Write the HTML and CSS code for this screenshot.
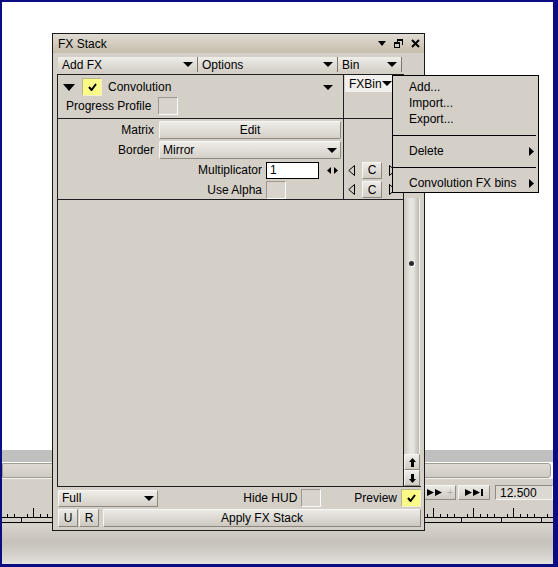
FILE: index.html
```html
<!DOCTYPE html>
<html>
<head>
<meta charset="utf-8">
<title>FX Stack</title>
<link rel="stylesheet" href="styles.css">
</head>
<body>
<div class="screen">
  <div class="desk"></div>
  <div class="band"></div>
  <div class="band-gap"></div>
  <div class="slider"></div>
  <div class="transport">
    <div class="tbtn tbtn-ff">
      <svg width="16" height="7" viewBox="0 0 16 7"><path d="M0 0l7 3.5L0 7zM8 0l7 3.5L8 7z" fill="#000"/></svg>
      <span class="plus">+</span>
    </div>
    <div class="tbtn tbtn-end">
      <svg width="19" height="7" viewBox="0 0 19 7"><path d="M0 0l7 3.5L0 7zM8 0l7 3.5L8 7z" fill="#000"/><rect x="16" y="0" width="2" height="7" fill="#000"/></svg>
    </div>
    <div class="tfield">12.500</div>
  </div>
  <div class="ruler">
    <svg width="551" height="19" viewBox="0 0 551 19">
      <defs>
        <pattern id="ticks" x="31" y="0" width="40" height="19" patternUnits="userSpaceOnUse">
          <path d="M0.5 3v9M7.5 9v3M14.5 9v3M21.5 9v3M28.5 12v5M34.5 9v3" stroke="#000" stroke-width="1"/>
        </pattern>
      </defs>
      <rect x="0" y="0" width="551" height="19" fill="url(#ticks)"/>
      <path d="M0 12.5H551M0 17.5H551" stroke="#000" stroke-width="1"/>
    </svg>
  </div>
  <div class="floor"></div>

  <div class="window">
    <div class="titlebar">
      <span class="title">FX Stack</span>
      <div class="tb-icons">
        <svg width="8" height="5" viewBox="0 0 8 5"><path d="M0 0h8L4 5z" fill="#000"/></svg>
        <svg width="9" height="9" viewBox="0 0 9 9"><rect x="3" y="0" width="6" height="2" fill="#000"/><path d="M8.5 2v4M3.5 2v1" stroke="#000"/><rect x="0" y="3" width="6" height="2" fill="#000"/><rect x="0.5" y="4.5" width="5" height="4" fill="none" stroke="#000"/></svg>
        <svg width="9" height="9" viewBox="0 0 9 9"><path d="M1 1L8 8M8 1L1 8" stroke="#000" stroke-width="2"/></svg>
      </div>
    </div>
    <div class="win-body">
      <div class="menubar">
        <div class="dd dd-add"><span>Add FX</span><svg width="10" height="5" viewBox="0 0 10 5"><path d="M0 0h10L5 5z" fill="#000"/></svg></div>
        <div class="dd dd-opt"><span>Options</span><svg width="10" height="5" viewBox="0 0 10 5"><path d="M0 0h10L5 5z" fill="#000"/></svg></div>
        <div class="dd dd-bin"><span>Bin</span><svg width="10" height="5" viewBox="0 0 10 5"><path d="M0 0h10L5 5z" fill="#000"/></svg></div>
      </div>
      <div class="stack">
        <div class="scroll-panel">
          <div class="fx-head">
            <div class="head-main">
              <div class="head-row">
                <svg class="collapse" width="12" height="7" viewBox="0 0 12 7"><path d="M0 0h12L6 7z" fill="#000"/></svg>
                <span class="ycheck"><svg width="9" height="8" viewBox="0 0 9 8"><path d="M1 4l2.5 3L8 1" fill="none" stroke="#000" stroke-width="2"/></svg></span>
                <span class="fx-name">Convolution</span>
                <svg class="head-arrow" width="10" height="5" viewBox="0 0 10 5"><path d="M0 0h10L5 5z" fill="#000"/></svg>
              </div>
              <div class="prog-row">
                <span>Progress Profile</span>
                <span class="cbox cbox-prog"></span>
              </div>
            </div>
            <div class="head-side">
              <div class="fxbin"><span>FXBin</span><svg width="10" height="5" viewBox="0 0 10 5"><path d="M0 0h10L5 5z" fill="#000"/></svg></div>
            </div>
          </div>
          <div class="fx-params">
            <div class="params-main">
              <div class="prow">
                <span class="plabel">Matrix</span>
                <div class="pbtn">Edit</div>
              </div>
              <div class="prow">
                <span class="plabel">Border</span>
                <div class="pdd"><span>Mirror</span><svg width="10" height="5" viewBox="0 0 10 5"><path d="M0 0h10L5 5z" fill="#000"/></svg></div>
              </div>
              <div class="prow">
                <span class="plabel plabel-wide">Multiplicator</span>
                <div class="pinput">1</div>
                <svg class="lr" width="11" height="7" viewBox="0 0 11 7"><path d="M0 3.5L4 0v7zM7 0l4 3.5L7 7z" fill="#000"/></svg>
              </div>
              <div class="prow">
                <span class="plabel plabel-wide">Use Alpha</span>
                <span class="cbox"></span>
              </div>
            </div>
            <div class="params-side">
              <div class="srow"></div>
              <div class="srow"></div>
              <div class="srow">
                <svg width="7" height="11" viewBox="0 0 7 11"><path d="M6.5 0.5L0.8 5.5l5.7 5z" fill="none" stroke="#000"/></svg>
                <span class="cbtn">C</span>
                <svg width="7" height="11" viewBox="0 0 7 11"><path d="M0.5 0.5l5.7 5-5.7 5z" fill="none" stroke="#000"/></svg>
              </div>
              <div class="srow">
                <svg width="7" height="11" viewBox="0 0 7 11"><path d="M6.5 0.5L0.8 5.5l5.7 5z" fill="none" stroke="#000"/></svg>
                <span class="cbtn">C</span>
                <svg width="7" height="11" viewBox="0 0 7 11"><path d="M0.5 0.5l5.7 5-5.7 5z" fill="none" stroke="#000"/></svg>
              </div>
            </div>
          </div>
        </div>
        <div class="vscroll">
          <div class="vs-top"></div>
          <div class="vs-track"><span class="vs-dot"></span></div>
          <div class="vs-btn"><svg width="7" height="9" viewBox="0 0 7 9"><path d="M3.5 0L7 4H5v5H2V4H0z" fill="#000"/></svg></div>
          <div class="vs-btn"><svg width="7" height="9" viewBox="0 0 7 9"><path d="M3.5 9L7 5H5V0H2v5H0z" fill="#000"/></svg></div>
        </div>
      </div>
      <div class="bottom-row">
        <div class="gdd"><span>Full</span><svg width="10" height="5" viewBox="0 0 10 5"><path d="M0 0h10L5 5z" fill="#000"/></svg></div>
        <span class="spacer"></span>
        <span class="blabel">Hide HUD</span>
        <span class="cbox"></span>
        <span class="blabel blabel-prev">Preview</span>
        <span class="ycheck"><svg width="9" height="8" viewBox="0 0 9 8"><path d="M1 4l2.5 3L8 1" fill="none" stroke="#000" stroke-width="2"/></svg></span>
      </div>
      <div class="apply-row">
        <div class="gbtn small">U</div>
        <div class="gbtn small">R</div>
        <div class="gbtn apply">Apply FX Stack</div>
      </div>
    </div>
  </div>

  <div class="menu">
    <div class="mitem">Add...</div>
    <div class="mitem">Import...</div>
    <div class="mitem">Export...</div>
    <div class="msep"></div>
    <div class="mitem"><span>Delete</span><svg width="5" height="9" viewBox="0 0 5 9"><path d="M0 0l5 4.5L0 9z" fill="#000"/></svg></div>
    <div class="msep"></div>
    <div class="mitem"><span>Convolution FX bins</span><svg width="5" height="9" viewBox="0 0 5 9"><path d="M0 0l5 4.5L0 9z" fill="#000"/></svg></div>
  </div>
</div>
</body>
</html>
```

FILE: styles.css
```css
* { box-sizing: border-box; }
html, body { margin: 0; padding: 0; background: #fff; }
body {
  font-family: "Liberation Sans", Arial, sans-serif;
  font-size: 12px;
  color: #000;
}
svg { display: block; flex: none; }

.screen {
  position: relative;
  width: 558px;
  height: 567px;
  border-style: solid;
  border-color: #0b0b82;
  border-width: 2px 5px 3px 2px;
  display: flex;
  flex-direction: column;
  overflow: hidden;
  background: #fff;
}

/* background application */
.desk { height: 448px; background: #fff; flex: none; }
.band { height: 12px; background: #bfbfbf; flex: none; }
.band-gap { height: 1px; background: #fff; flex: none; }
.slider {
  height: 15px;
  flex: none;
  margin-right: 2px;
  border: 1px solid #a19d95;
  border-radius: 0 3px 3px 0;
  background: linear-gradient(#dedad3, #d0ccc4);
}
.transport {
  height: 27px;
  flex: none;
  background: #d4d0c8;
  display: flex;
  justify-content: flex-end;
  align-items: flex-start;
  padding-top: 6px;
  border-top: 1px solid #f2f0ec;
}
.tbtn {
  height: 15px;
  display: flex;
  align-items: center;
  justify-content: center;
  background: linear-gradient(#ebe9e5, #cfcbc3);
  border: 1px solid;
  border-color: #f6f5f2 #8f8b83 #8f8b83 #f6f5f2;
}
.tbtn-ff { width: 36px; gap: 4px; padding-left: 6px; justify-content: flex-start; }
.plus { color: #b4b0a8; font-size: 11px; line-height: 1; }
.tbtn-end { width: 32px; margin-left: 2px; }
.tfield {
  width: 58px;
  height: 15px;
  margin-left: 5px;
  padding-left: 4px;
  display: flex;
  align-items: center;
  background: #dcd9d2;
  border: 1px solid;
  border-color: #8f8b83 #f6f5f2 #f6f5f2 #8f8b83;
  font-size: 12px;
}
.ruler { height: 19px; flex: none; background: #d4d0c8; }
.floor {
  flex: 1;
  background: linear-gradient(#d8d4cc, #c6c2ba 45%, #d6d3cd 80%, #e4e2dd);
}

/* FX Stack window */
.window {
  position: absolute;
  left: 50px;
  top: 31px;
  width: 373px;
  height: 498px;
  border: 1px solid #1a1a1a;
  background: #d4d0c8;
  display: flex;
  flex-direction: column;
}
.titlebar {
  height: 19px;
  flex: none;
  display: flex;
  align-items: center;
  padding: 0 4px 0 5px;
  background: linear-gradient(#e0dcd4, #c6bcaa);
}
.title { flex: 1; }
.tb-icons { display: flex; align-items: center; gap: 8px; }

.win-body {
  flex: 1;
  display: flex;
  flex-direction: column;
  padding: 4px 3px 3px 4px;
}
.menubar { height: 15px; display: flex; margin-left: 1px; flex: none; }
.dd {
  height: 15px;
  display: flex;
  align-items: center;
  justify-content: space-between;
  padding: 0 4px 0 4px;
  background: linear-gradient(#efede9, #d3cfc7);
  border-right: 1px solid #7c7870;
}
.dd-add, .dd-opt { width: 140px; }
.dd-bin { width: 64px; }

.stack {
  height: 413px;
  margin-top: 2px;
  display: flex;
  flex: none;
}
.scroll-panel {
  width: 347px;
  border: 1px solid #1e1e1e;
  display: flex;
  flex-direction: column;
}
.fx-head {
  height: 44px;
  flex: none;
  display: flex;
  border-bottom: 1px solid #1e1e1e;
}
.head-main {
  width: 286px;
  border-right: 1px solid #1e1e1e;
  padding-top: 3px;
  display: flex;
  flex-direction: column;
}
.head-row {
  height: 18px;
  display: flex;
  align-items: center;
  padding-left: 5px;
}
.ycheck {
  width: 20px;
  height: 18px;
  display: flex;
  align-items: center;
  justify-content: center;
  background: #fafa86;
  border: 1px solid;
  border-color: #b9b58e #f0eed0 #f0eed0 #b9b58e;
  flex: none;
}
.head-row .ycheck { margin-left: 7px; }
.fx-name { margin-left: 6px; }
.head-arrow { margin-left: auto; margin-right: 10px; }
.prog-row {
  height: 18px;
  margin-top: 1px;
  display: flex;
  align-items: center;
  padding-left: 8px;
}
.cbox {
  width: 20px;
  height: 18px;
  flex: none;
  background: #d8d4cd;
  border: 1px solid;
  border-color: #9c988f #fafaf8 #fafaf8 #9c988f;
}
.cbox-prog { margin-left: 7px; }
.head-side { flex: 1; }
.fxbin {
  width: 48px;
  height: 17px;
  margin-left: 1px;
  padding: 0 2px 0 4px;
  display: flex;
  align-items: center;
  justify-content: space-between;
  background: #f2f0ec;
}

.fx-params {
  height: 81px;
  flex: none;
  display: flex;
  border-bottom: 1px solid #1e1e1e;
}
.params-main {
  width: 286px;
  border-right: 1px solid #1e1e1e;
  padding-top: 1px;
  display: flex;
  flex-direction: column;
}
.prow {
  height: 20px;
  flex: none;
  display: flex;
  align-items: center;
}
.prow:last-child { height: 19px; }
.plabel {
  width: 96px;
  margin-right: 5px;
  text-align: right;
  flex: none;
}
.plabel-wide { width: 204px; margin-right: 4px; }
.pbtn, .pdd {
  width: 182px;
  height: 18px;
  display: flex;
  align-items: center;
  background: linear-gradient(#efede9, #d4d0c8);
  border: 1px solid;
  border-color: #f7f6f3 #8e8a82 #8e8a82 #f7f6f3;
  border-radius: 2px;
}
.pbtn { justify-content: center; }
.pdd { justify-content: space-between; padding: 0 3px 0 3px; }
.pinput {
  width: 53px;
  height: 17px;
  padding-left: 3px;
  display: flex;
  align-items: center;
  background: #fff;
  border: 1px solid #000;
}
.lr { margin-left: 8px; }
.params-side { flex: 1; display: flex; flex-direction: column; padding-top: 1px; }
.srow {
  height: 20px;
  flex: none;
  display: flex;
  align-items: center;
  padding-left: 4px;
  gap: 7px;
}
.srow:last-child { height: 19px; }
.cbtn {
  width: 20px;
  height: 17px;
  display: flex;
  align-items: center;
  justify-content: center;
  background: linear-gradient(#edebe7, #d2cec6);
  border: 1px solid;
  border-color: #f7f6f3 #8e8a82 #8e8a82 #f7f6f3;
}

.vscroll {
  width: 17px;
  display: flex;
  flex-direction: column;
  border-bottom: 1px solid #1e1e1e;
}
.vs-top { height: 124px; flex: none; }
.vs-track {
  flex: 1;
  width: 16px;
  display: flex;
  flex-direction: column;
  align-items: center;
  background: linear-gradient(to right, #cac6be, #e6e4df 40%, #e8e6e1 60%, #bdb9b1);
  border-right: 1px solid #f2f0ec;
}
.vs-dot {
  width: 5px;
  height: 5px;
  margin-top: 63px;
  border-radius: 50%;
  background: #2a2a2a;
  box-shadow: 1px 1px 0 #fff;
}
.vs-btn {
  width: 16px;
  height: 16px;
  flex: none;
  display: flex;
  align-items: center;
  justify-content: center;
  background: linear-gradient(#efede9, #d0ccc4);
  border: 1px solid;
  border-color: #f7f6f3 #8e8a82 #8e8a82 #f7f6f3;
}

.bottom-row {
  height: 18px;
  margin-top: 2px;
  margin-left: 1px;
  display: flex;
  align-items: center;
  flex: none;
}
.gdd {
  width: 100px;
  height: 17px;
  display: flex;
  align-items: center;
  justify-content: space-between;
  padding: 0 3px 0 3px;
  background: linear-gradient(#efede9, #d3cfc7);
  border: 1px solid;
  border-color: #f7f6f3 #8e8a82 #8e8a82 #f7f6f3;
}
.spacer { flex: 1; }
.blabel { margin-right: 4px; }
.blabel-prev { margin-left: 33px; }

.apply-row {
  height: 18px;
  margin-top: 2px;
  margin-left: 1px;
  display: flex;
  flex: none;
}
.gbtn {
  height: 18px;
  display: flex;
  align-items: center;
  justify-content: center;
  background: linear-gradient(#eceae6, #cdc9c1);
  border: 1px solid;
  border-color: #f7f6f3 #8a867e #8a867e #f7f6f3;
}
.small { width: 20px; margin-right: 1px; }
.apply { flex: 1; margin-left: 3px; }

/* popup menu */
.menu {
  position: absolute;
  left: 390px;
  top: 73px;
  width: 147px;
  height: 118px;
  border: 1px solid #000;
  background: #d4d0c8;
  padding: 3px 0 2px 0;
  display: flex;
  flex-direction: column;
}
.mitem {
  height: 16px;
  flex: none;
  display: flex;
  align-items: center;
  justify-content: space-between;
  padding: 0 4px 0 16px;
}
.msep {
  height: 1px;
  flex: none;
  margin: 8px 2px 7px 0;
  background: #000;
}
```
